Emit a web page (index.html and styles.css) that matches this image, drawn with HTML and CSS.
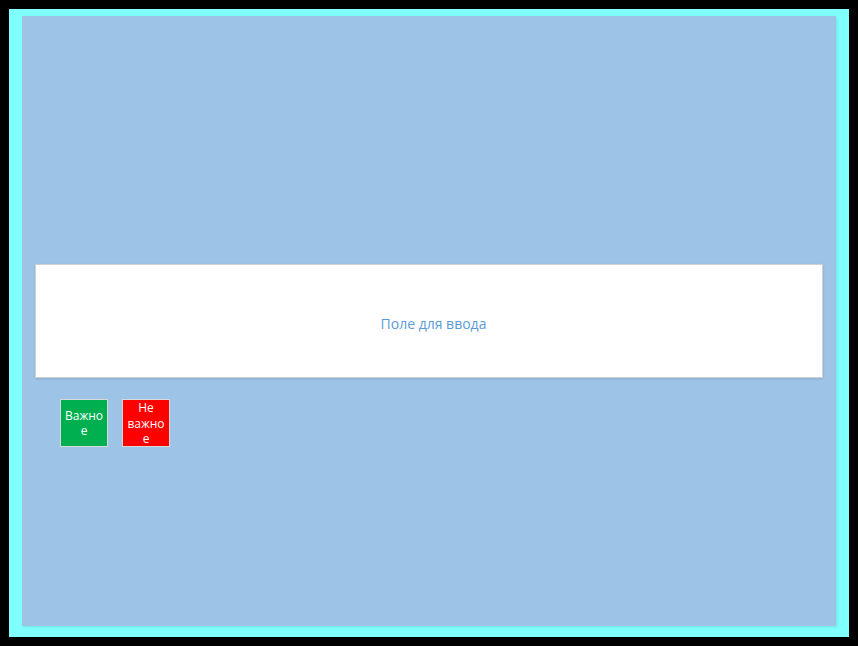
FILE: index.html
```html
<!DOCTYPE html>
<html lang="ru">
<head>
<meta charset="utf-8">
<title>Поле для ввода</title>
<link rel="stylesheet" href="styles.css">
</head>
<body>
<div class="frame">
  <div class="panel">
    <div class="content">
      <div class="input-box">
        <input class="input" type="text" placeholder="Поле для ввода">
      </div>
      <div class="actions">
        <button class="tag tag-green">Важное</button>
        <button class="tag tag-red">Не важное</button>
      </div>
    </div>
  </div>
</div>
</body>
</html>
```
FILE: styles.css
```css
html, body {
  margin: 0;
  height: 100%;
}
body {
  background: #000;
  padding: 9px;
  box-sizing: border-box;
  font-family: "Open Sans", "Noto Sans", sans-serif;
}
.frame {
  background: #80ffff;
  height: 628px;
  width: 840px;
  padding: 7px 13px 11px 13px;
  box-sizing: border-box;
}
.panel {
  background: #9dc3e6;
  height: 100%;
  box-shadow: 1px 1px 3px rgba(0, 0, 0, 0.12);
  padding: 0 13px;
  box-sizing: border-box;
  display: flex;
  flex-direction: column;
  justify-content: center;
}
.content {
  display: flex;
  flex-direction: column;
  margin-top: 69px;
}
.input-box {
  height: 114px;
  background: #fff;
  border: 1px solid #d0d0d0;
  box-sizing: border-box;
  box-shadow: 0 1px 2px rgba(0, 0, 0, 0.12);
  display: flex;
}
.input {
  flex: 1;
  min-width: 0;
  border: 0;
  outline: none;
  background: transparent;
  text-align: center;
  font-family: "Open Sans", "Noto Sans", sans-serif;
  font-size: 14px;
  color: #5b9bd5;
  padding: 4px 0 0 9px;
}
.input::placeholder {
  color: #5b9bd5;
  opacity: 1;
}
.actions {
  display: flex;
  gap: 14px;
  margin-top: 21px;
  padding-left: 25px;
}
.tag {
  width: 48px;
  height: 48px;
  box-sizing: border-box;
  border: 1px solid #d9d9d9;
  padding: 0 2px;
  margin: 0;
  color: #fff;
  font-family: "Open Sans", "Noto Sans", sans-serif;
  font-size: 12px;
  line-height: 15.5px;
  overflow-wrap: anywhere;
  text-align: center;
  cursor: pointer;
}
.tag-green { background: #00b050; }
.tag-red { background: #ff0000; }
```
